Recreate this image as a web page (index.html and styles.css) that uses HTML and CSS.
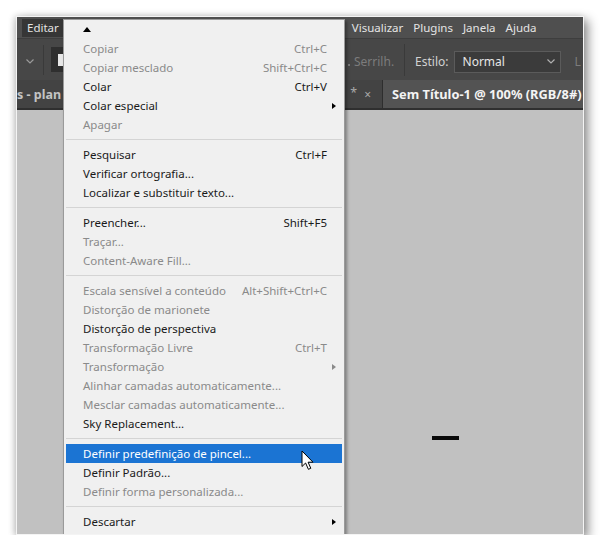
FILE: index.html
```html
<!DOCTYPE html>
<html lang="pt">
<head>
<meta charset="utf-8">
<title>Editar</title>
<link rel="stylesheet" href="styles.css">
</head>
<body>
<div class="window">
  <div class="menubar">
    <span class="mb-item active">Editar</span>
    <span class="mb-spacer"></span>
    <span class="mb-item">Visualizar</span>
    <span class="mb-item">Plugins</span>
    <span class="mb-item">Janela</span>
    <span class="mb-item">Ajuda</span>
  </div>
  <div class="toolbar">
    <div class="tb-left">
      <svg class="chev" width="8" height="5" viewBox="0 0 8 5"><path d="M0.5 0.5 L4 4 L7.5 0.5" fill="none" stroke="#9a9a9a" stroke-width="1.2"/></svg>
      <span class="tb-vsep"></span>
      <span class="swatch-box"><span class="swatch"></span></span>
    </div>
    <span class="tb-spacer"></span>
    <div class="tb-right">
      <span class="check-edge"></span>
      <span class="tb-dim">Serrilh.</span>
      <span class="tb-vsep tall"></span>
      <span class="tb-label">Estilo:</span>
      <span class="select">Normal<svg width="8" height="5" viewBox="0 0 8 5"><path d="M0.5 0.5 L4 4 L7.5 0.5" fill="none" stroke="#b0b0b0" stroke-width="1.2"/></svg></span>
      <span class="tb-dim">L</span>
    </div>
  </div>
  <div class="tabbar">
    <div class="tab">
      <span class="tab-title">s - plan</span>
      <span class="tab-mark">*</span>
      <span class="tab-close">×</span>
    </div>
    <div class="tab active">
      <span class="tab-title">Sem Título-1 @ 100% (RGB/8#)</span>
    </div>
  </div>
  <div class="canvas">
    <span class="dash"></span>
  </div>

  <div class="menu">
    <div class="m-top"><span class="up"></span></div>
    <div class="m-item dis"><span>Copiar</span><span>Ctrl+C</span></div>
    <div class="m-item dis"><span>Copiar mesclado</span><span>Shift+Ctrl+C</span></div>
    <div class="m-item"><span>Colar</span><span>Ctrl+V</span></div>
    <div class="m-item sub"><span>Colar especial</span><span class="arr"></span></div>
    <div class="m-item dis"><span>Apagar</span></div>
    <div class="sep"></div>
    <div class="m-item"><span>Pesquisar</span><span>Ctrl+F</span></div>
    <div class="m-item"><span>Verificar ortografia...</span></div>
    <div class="m-item"><span>Localizar e substituir texto...</span></div>
    <div class="sep"></div>
    <div class="m-item"><span>Preencher...</span><span>Shift+F5</span></div>
    <div class="m-item dis"><span>Traçar...</span></div>
    <div class="m-item dis"><span>Content-Aware Fill...</span></div>
    <div class="sep"></div>
    <div class="m-item dis"><span>Escala sensível a conteúdo</span><span>Alt+Shift+Ctrl+C</span></div>
    <div class="m-item dis"><span>Distorção de marionete</span></div>
    <div class="m-item"><span>Distorção de perspectiva</span></div>
    <div class="m-item dis"><span>Transformação Livre</span><span>Ctrl+T</span></div>
    <div class="m-item dis sub"><span>Transformação</span><span class="arr"></span></div>
    <div class="m-item dis"><span>Alinhar camadas automaticamente...</span></div>
    <div class="m-item dis"><span>Mesclar camadas automaticamente...</span></div>
    <div class="m-item"><span>Sky Replacement...</span></div>
    <div class="sep"></div>
    <div class="m-item hl"><span>Definir predefinição de pincel...</span></div>
    <div class="m-item"><span>Definir Padrão...</span></div>
    <div class="m-item dis"><span>Definir forma personalizada...</span></div>
    <div class="sep"></div>
    <div class="m-item sub"><span>Descartar</span><span class="arr"></span></div>
  </div>

  <svg class="cursor" width="14" height="21" viewBox="0 0 14 21"><path d="M1 1 L1 16.5 L4.6 13 L7.4 19.3 L9.8 18.3 L7.1 12.2 L12 12.2 Z" fill="#fff" stroke="#000" stroke-width="1" stroke-linejoin="round"/></svg>
</div>
</body>
</html>
```

FILE: styles.css
```css
* { box-sizing: border-box; }
body {
  margin: 0;
  background: #ffffff;
  font-family: "Noto Sans", "DejaVu Sans", sans-serif;
}
.window {
  position: relative;
  margin: 16px 0 0 16px;
  width: 568px;
  height: 519px;
  border: 1px solid #f4f4f4;
  box-shadow: 4px 4px 10px rgba(0,0,0,0.45), -2px 0 6px rgba(0,0,0,0.15);
  overflow: hidden;
  display: flex;
  flex-direction: column;
  background: #c1c1c1;
}

/* menu bar */
.menubar {
  height: 21px;
  flex: 0 0 auto;
  background: #4f4f4f;
  display: flex;
  align-items: center;
  padding-left: 5px;
  font-size: 11.5px;
  color: #e4e4e4;
}
.mb-item {
  padding: 0 5px;
  height: 18px;
  line-height: 18px;
  white-space: nowrap;
}
.mb-item.active { background: #363636; }
.mb-spacer { width: 283px; flex: 0 0 auto; }

/* toolbar */
.toolbar {
  height: 42px;
  flex: 0 0 auto;
  background: #474747;
  border-top: 1px solid #3e3e3e;
  display: flex;
  align-items: center;
  font-size: 12px;
}
.tb-left {
  display: flex;
  align-items: center;
  height: 100%;
  padding-left: 9px;
}
.chev { display: block; margin-top: 3px; }
.tb-vsep {
  width: 1px;
  height: 30px;
  background: #3a3a3a;
  margin: 0 7px 0 9px;
}
.tb-vsep.tall { height: 32px; margin: 0 10px 0 10px; }
.swatch-box {
  width: 40px;
  height: 25px;
  background: #2f2f2f;
  display: flex;
  align-items: center;
  padding-left: 7px;
}
.swatch { width: 8px; height: 12px; background: #e8e8e8; }
.tb-spacer { width: 257px; flex: 0 0 auto; }
.tb-right {
  display: flex;
  align-items: center;
  height: 100%;
  padding-top: 4px;
  white-space: nowrap;
}
.tb-right .tb-vsep.tall { margin-top: -4px; }
.check-edge {
  width: 2px;
  height: 2px;
  background: #7a7a7a;
  margin: 6px 4px 0 0;
}
.tb-dim { color: #7c7c7c; }
.tb-label { color: #d2d2d2; margin-right: 5px; }
.select {
  width: 107px;
  height: 22px;
  background: #3b3b3b;
  border: 1px solid #5b5b5b;
  color: #e6e6e6;
  display: flex;
  align-items: center;
  justify-content: space-between;
  padding: 0 5px 0 8px;
  margin-right: 14px;
}

/* tab bar */
.tabbar {
  height: 30px;
  flex: 0 0 auto;
  background: #3a3a3a;
  border-bottom: 2px solid #2f2f2f;
  display: flex;
  font-size: 12.5px;
  font-weight: bold;
  white-space: nowrap;
}
.tab {
  display: flex;
  align-items: center;
  overflow: hidden;
  background: #434343;
  color: #c4c4c4;
}
.tab:first-child { width: 365px; flex: 0 0 auto; padding-right: 11px; }
.tab:first-child .tab-title { flex: 1; overflow: hidden; }
.tab-mark { color: #a8a8a8; margin: 0 7px 4px 6px; font-weight: normal; }
.tab-close { color: #a8a8a8; font-weight: normal; font-size: 12px; }
.tab.active {
  flex: 1;
  background: #535353;
  color: #f4f4f4;
  padding-left: 9px;
  border-left: 1px solid #2e2e2e;
  font-size: 12.8px;
}

/* canvas */
.canvas {
  flex: 1;
  position: relative;
  background: #c1c1c1;
}
.dash {
  position: absolute;
  left: 415px;
  top: 326px;
  width: 27px;
  height: 4px;
  background: #0a0a0a;
}

/* dropdown menu */
.menu {
  position: absolute;
  left: 46px;
  top: 2px;
  width: 282px;
  height: 540px;
  background: #f0f0f0;
  border: 1px solid #9a9a9a;
  box-shadow: 2px 2px 3px rgba(0,0,0,0.35);
  font-size: 11.5px;
  color: #1a1a1a;
}
.m-top {
  height: 19px;
  display: flex;
  align-items: center;
  padding-left: 19px;
}
.up {
  width: 0;
  height: 0;
  border-left: 4.5px solid transparent;
  border-right: 4.5px solid transparent;
  border-bottom: 5px solid #000;
  margin-top: -1px;
}
.m-item {
  height: 19px;
  margin: 0 2px;
  padding: 0 15px 0 17px;
  display: flex;
  align-items: center;
  justify-content: space-between;
  white-space: nowrap;
}
.m-item.dis { color: #8a8a8a; }
.m-item.sub { padding-right: 6px; }
.m-item.hl { background: #1b74d3; color: #ffffff; }
.arr {
  width: 0;
  height: 0;
  border-top: 3.5px solid transparent;
  border-bottom: 3.5px solid transparent;
  border-left: 4px solid #000;
}
.m-item.dis .arr { border-left-color: #8a8a8a; }
.sep {
  height: 11px;
  margin: 0 2px;
  display: flex;
  align-items: center;
}
.sep::before {
  content: "";
  display: block;
  width: 100%;
  height: 1px;
  background: #d4d4d4;
}

/* mouse pointer */
.cursor {
  position: absolute;
  left: 284px;
  top: 433px;
}
```
